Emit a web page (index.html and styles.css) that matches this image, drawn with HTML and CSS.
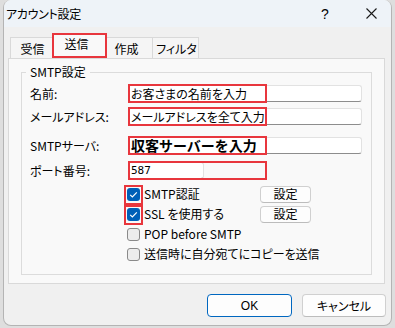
FILE: index.html
```html
<!DOCTYPE html>
<html lang="ja">
<head>
<meta charset="utf-8">
<link rel="stylesheet" href="styles.css">
</head>
<body>
<div class="window">
  <div class="titlebar">
    <span class="title">アカウント設定</span>
    <span class="help">?</span>
    <span class="close"><svg width="11" height="11" viewBox="0 0 11 11"><path d="M0.5 0.5 L10.5 10.5 M10.5 0.5 L0.5 10.5" stroke="#1a1a1a" stroke-width="1.1" fill="none"/></svg></span>
  </div>
  <div class="tabs">
    <div class="tab t1">受信</div>
    <div class="tab sel">送信</div>
    <div class="tab t3">作成</div>
    <div class="tab t4">フィルタ</div>
  </div>
  <div class="panel">
    <fieldset class="group">
      <legend>SMTP設定</legend>
      <div class="row r1">
        <span class="lbl">名前:</span>
        <div class="field"><div class="box">お客さまの名前を入力</div><span class="mark"></span></div>
      </div>
      <div class="row r2">
        <span class="lbl">メールアドレス:</span>
        <div class="field"><div class="box">メールアドレスを全て入力</div><span class="mark"></span></div>
      </div>
      <div class="row r3">
        <span class="lbl">SMTPサーバ:</span>
        <div class="field"><div class="box bold">収客サーバーを入力</div><span class="mark"></span></div>
      </div>
      <div class="row r4">
        <span class="lbl">ポート番号:</span>
        <div class="field"><div class="box port">587</div><span class="mark"></span></div>
      </div>
      <div class="checks">
        <div class="crow">
          <span class="chk on marked"><svg width="13" height="13" viewBox="0 0 13 13"><path d="M3.2 6.8 L5.4 9 L9.8 4.4" stroke="#fff" stroke-width="1.2" fill="none"/></svg></span>
          <span class="cl">SMTP認証</span>
          <span class="btn small">設定</span>
        </div>
        <div class="crow">
          <span class="chk on marked"><svg width="13" height="13" viewBox="0 0 13 13"><path d="M3.2 6.8 L5.4 9 L9.8 4.4" stroke="#fff" stroke-width="1.2" fill="none"/></svg></span>
          <span class="cl">SSL を使用する</span>
          <span class="btn small">設定</span>
        </div>
        <div class="crow">
          <span class="chk"></span>
          <span class="cl">POP before SMTP</span>
        </div>
        <div class="crow">
          <span class="chk"></span>
          <span class="cl wide">送信時に自分宛てにコピーを送信</span>
        </div>
      </div>
    </fieldset>
  </div>
  <div class="footer">
    <span class="btn big ok">OK</span>
    <span class="btn big cancel">キャンセル</span>
  </div>
</div>
</body>
</html>
```
FILE: styles.css
```css
html, body {
  margin: 0;
  padding: 0;
}
body {
  width: 395px;
  height: 328px;
  overflow: hidden;
  background: #dedede;
  font-family: "Noto Sans CJK JP", "Noto Sans", sans-serif;
  font-size: 12px;
  font-feature-settings: "palt";
  color: #000;
}
.window {
  margin-left: 3px;
  width: 389px;
  height: 326px;
  box-sizing: border-box;
  border: 1px solid #b4b4b4;
  border-top: none;
  border-radius: 8px;
  background: #f0f0f0;
  overflow: hidden;
  display: flex;
  flex-direction: column;
}
.titlebar {
  height: 27px;
  background: #eef3f8;
  display: flex;
  align-items: center;
  flex: none;
}
.title {
  flex: 1;
  padding-left: 2px;
  font-size: 12px;
  letter-spacing: -0.3px;
  line-height: 14px;
}
.help {
  width: 52px;
  text-align: center;
  font-family: "Liberation Sans", sans-serif;
  font-size: 14px;
}
.close {
  width: 40px;
  display: flex;
  justify-content: center;
}
.tabs {
  flex: none;
  height: 31px;
  display: flex;
  align-items: flex-end;
  padding-left: 6px;
}
.tab {
  height: 21px;
  box-sizing: border-box;
  border: 1px solid #d9d9d9;
  border-bottom: none;
  background: #f5f5f5;
  display: flex;
  align-items: center;
  justify-content: center;
  line-height: 14px;
  padding-top: 1px;
}
.t1 { width: 42px; border-right: none; padding-left: 2px; }
.t3 { width: 46px; border-left: none; padding-right: 6px; }
.t4 { width: 46px; border-left: none; padding-left: 2px; }
.sel {
  width: 55px;
  height: 25px;
  background: #f9f9f9;
  border: 2px solid #e8363d;
  padding-right: 6px;
  padding-top: 0;
  padding-bottom: 4px;
}
.panel {
  flex: none;
  margin-left: 4px;
  width: 377px;
  height: 226px;
  box-sizing: border-box;
  background: #f9f9f9;
  border: 1px solid #d9d9d9;
}
.group {
  margin: 6px 0 0 12px;
  width: 351px;
  height: 210px;
  box-sizing: border-box;
  padding: 0 0 0 8px;
  border: 1px solid #dcdcdc;
  min-width: 0;
}
.group legend {
  margin-left: -4px;
  padding: 0 4px;
  line-height: 14px;
  font-size: 12px;
}
.row {
  display: flex;
  align-items: center;
  height: 17px;
}
.r1 { margin-top: 6px; }
.r2 { margin-top: 6px; }
.r3 { margin-top: 12px; }
.r4 { margin-top: 8px; }
.lbl {
  width: 98px;
  flex: none;
  line-height: 14px;
}
.field {
  position: relative;
  width: 234px;
  height: 17px;
}
.box {
  height: 17px;
  box-sizing: border-box;
  background: #fff;
  border: 1px solid #e2e2e2;
  border-bottom-color: #8d8d8d;
  border-radius: 3px;
  padding-left: 2px;
  line-height: 15px;
  font-size: 12px;
  white-space: nowrap;
}
.box.bold {
  font-weight: bold;
  font-size: 14px;
  font-feature-settings: normal;
  letter-spacing: 0;
}
.box.port {
  width: 76px;
  font-family: "DejaVu Sans Mono", monospace;
  font-size: 11px;
}
.mark {
  position: absolute;
  left: 0;
  top: -1px;
  width: 139px;
  height: 19px;
  box-sizing: border-box;
  border: 2px solid #e8363d;
}
.checks {
  margin: 5px 0 0 97px;
}
.crow {
  display: flex;
  align-items: center;
  height: 20px;
}
.chk {
  position: relative;
  flex: none;
  width: 13px;
  height: 13px;
  box-sizing: border-box;
  border-radius: 3px;
  border: 1px solid #8a8a8a;
  background: #ededed;
}
.chk.on {
  border: none;
  background: #005fb8;
}
.chk svg {
  display: block;
}
.chk.marked::after {
  content: "";
  position: absolute;
  left: -3px;
  top: -3px;
  width: 19px;
  height: 20px;
  box-sizing: border-box;
  border: 2px solid #e8363d;
}
.cl {
  margin-left: 4px;
  width: 116px;
  line-height: 14px;
  white-space: nowrap;
}
.cl.wide { width: auto; }
.btn {
  display: flex;
  align-items: center;
  justify-content: center;
  box-sizing: border-box;
  background: #fdfdfd;
  border: 1px solid #d0d0d0;
  border-bottom-color: #bcbcbc;
  border-radius: 4px;
  line-height: 14px;
}
.small {
  width: 51px;
  height: 17px;
}
.footer {
  flex: none;
  display: flex;
  justify-content: flex-end;
  gap: 10px;
  padding: 10px 5px 0 0;
}
.big {
  height: 23px;
}
.ok {
  width: 85px;
  border: 1px solid #0067c0;
  font-family: "Liberation Sans", sans-serif;
}
.cancel {
  width: 84px;
}
```
